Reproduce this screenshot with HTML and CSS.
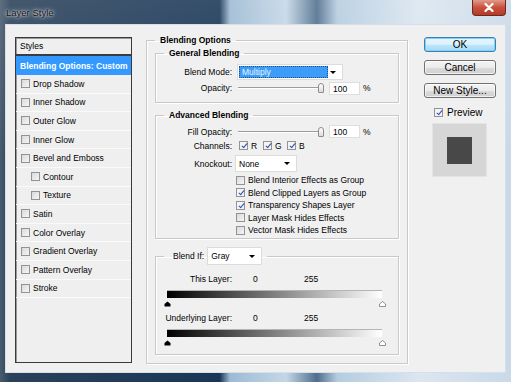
FILE: index.html
```html
<!DOCTYPE html>
<html lang="en">
<head>
    <meta charset="UTF-8">
    <title>Layer Style</title>
    <link rel="stylesheet" href="styles.css">
</head>
<body>
    <div class="window">
        <div class="titlebar">
            <span class="title">Layer Style</span>
            <div class="close">
                <svg width="10" height="9" viewBox="0 0 10 9"><path d="M1.5 1 L8.5 8 M8.5 1 L1.5 8" stroke="#fff" stroke-width="2.2" stroke-linecap="round"/></svg>
            </div>
        </div>
        <div class="client">
            <!-- styles list on the left -->
            <div class="styles-list">
                <div class="list-head">Styles</div>
                <div class="list-item selected">Blending Options: Custom</div>
                <div class="list-item"><span class="cb"></span>Drop Shadow</div>
                <div class="list-item"><span class="cb"></span>Inner Shadow</div>
                <div class="list-item"><span class="cb"></span>Outer Glow</div>
                <div class="list-item"><span class="cb"></span>Inner Glow</div>
                <div class="list-item"><span class="cb"></span>Bevel and Emboss</div>
                <div class="list-item sub"><span class="cb"></span>Contour</div>
                <div class="list-item sub"><span class="cb"></span>Texture</div>
                <div class="list-item"><span class="cb"></span>Satin</div>
                <div class="list-item"><span class="cb"></span>Color Overlay</div>
                <div class="list-item"><span class="cb"></span>Gradient Overlay</div>
                <div class="list-item"><span class="cb"></span>Pattern Overlay</div>
                <div class="list-item"><span class="cb"></span>Stroke</div>
            </div>

            <!-- blending options -->
            <fieldset class="group main">
                <legend>Blending Options</legend>

                <fieldset class="group general">
                    <legend>General Blending</legend>
                    <div class="row">
                        <label>Blend Mode:</label>
                        <div class="select mode"><span class="sel-text">Multiply</span><span class="arrow"></span></div>
                    </div>
                    <div class="row">
                        <label>Opacity:</label>
                        <div class="slider"><span class="track"></span><span class="knob"></span></div>
                        <span class="num">100</span>
                        <span class="pct">%</span>
                    </div>
                </fieldset>

                <fieldset class="group advanced">
                    <legend>Advanced Blending</legend>
                    <div class="row fill">
                        <label>Fill Opacity:</label>
                        <div class="slider"><span class="track"></span><span class="knob"></span></div>
                        <span class="num">100</span>
                        <span class="pct">%</span>
                    </div>
                    <div class="row channels">
                        <label>Channels:</label>
                        <span class="chan"><span class="cb on"></span>R</span>
                        <span class="chan"><span class="cb on"></span>G</span>
                        <span class="chan"><span class="cb on"></span>B</span>
                    </div>
                    <div class="row knockout">
                        <label>Knockout:</label>
                        <div class="select plain knock"><span class="sel-plain">None</span><span class="arrow"></span></div>
                    </div>
                    <div class="checks">
                        <div class="check"><span class="cb"></span>Blend Interior Effects as Group</div>
                        <div class="check"><span class="cb on"></span>Blend Clipped Layers as Group</div>
                        <div class="check"><span class="cb on"></span>Transparency Shapes Layer</div>
                        <div class="check"><span class="cb"></span>Layer Mask Hides Effects</div>
                        <div class="check"><span class="cb"></span>Vector Mask Hides Effects</div>
                    </div>
                </fieldset>

                <fieldset class="group blendif">
                    <legend>
                        <span class="legend-label">Blend If:</span>
                        <div class="select plain gray"><span class="sel-plain">Gray</span><span class="arrow"></span></div>
                    </legend>
                    <div class="row levels">
                        <label>This Layer:</label>
                        <span class="lo">0</span>
                        <span class="hi">255</span>
                    </div>
                    <div class="ramp"></div>
                    <div class="markers">
                        <svg width="7" height="6" viewBox="0 0 7 6"><path d="M3.5 0.5 L6.5 3 V5.5 H0.5 V3 Z" fill="#000"/></svg>
                        <svg width="7" height="6" viewBox="0 0 7 6"><path d="M3.5 0.5 L6.5 3 V5.5 H0.5 V3 Z" fill="#fff" stroke="#777" stroke-width="0.8"/></svg>
                    </div>
                    <div class="row levels second">
                        <label>Underlying Layer:</label>
                        <span class="lo">0</span>
                        <span class="hi">255</span>
                    </div>
                    <div class="ramp"></div>
                    <div class="markers">
                        <svg width="7" height="6" viewBox="0 0 7 6"><path d="M3.5 0.5 L6.5 3 V5.5 H0.5 V3 Z" fill="#000"/></svg>
                        <svg width="7" height="6" viewBox="0 0 7 6"><path d="M3.5 0.5 L6.5 3 V5.5 H0.5 V3 Z" fill="#fff" stroke="#777" stroke-width="0.8"/></svg>
                    </div>
                </fieldset>
            </fieldset>

            <!-- buttons and preview -->
            <div class="side">
                <div class="btn default">OK</div>
                <div class="btn">Cancel</div>
                <div class="btn">New Style...</div>
                <div class="preview-check"><span class="cb on"></span>Preview</div>
                <div class="swatch"><div class="swatch-inner"></div></div>
            </div>
        </div>
    </div>
</body>
</html>
```

FILE: styles.css
```css
body {
    margin: 0;
    font-family: "Liberation Sans", Arial, sans-serif;
    font-size: 8.5px;
    color: #000;
}

.window {
    width: 511px;
    height: 382px;
    display: flex;
    flex-direction: column;
    background:
        linear-gradient(rgba(255,255,255,0.12), rgba(255,255,255,0) 40%),
        linear-gradient(to right, #4a5c6e 0, #2a4159 2%, #1f3a58 30%, #1a3656 43%, #9dbad3 45%, #c4d7e7 56%, #4f6e8c 62%, #b5cce0 66%, #dbe6f0 82%, #c9d9e8 100%);
}

.titlebar {
    height: 24px;
    display: flex;
    align-items: center;
    padding-left: 6px;
}

.title {
    font-size: 9.5px;
    color: #111;
    text-shadow: 0 0 5px rgba(255,255,255,0.9), 0 0 2px rgba(255,255,255,0.9);
}

.close {
    margin-left: auto;
    margin-right: 5px;
    align-self: flex-start;
    width: 34px;
    height: 16px;
    display: flex;
    align-items: center;
    justify-content: center;
    background: linear-gradient(#e29a8a, #c8503e 50%, #b83a28);
    border: 1px solid #6b2a20;
    border-top: none;
    border-radius: 0 0 4px 4px;
    box-sizing: border-box;
}

.client {
    flex: 1;
    margin: 0 5px 9px 5px;
    background: #f0f0f0;
    border: 1px solid #d6e0ea;
    display: flex;
    align-items: flex-start;
    padding: 9px 9px 0 9px;
}

/* left list */
.styles-list {
    width: 117px;
    height: 326px;
    margin-top: 3px;
    box-sizing: border-box;
    border: 1px solid #3a3a3a;
    box-shadow: inset 1px 1px 0 #9a9a9a;
    background: #efefef;
    flex-shrink: 0;
}

.list-head {
    height: 16px;
    line-height: 16px;
    padding-left: 4px;
    border-bottom: 2px solid #3c3c3c;
}

.list-item {
    height: 18.6px;
    display: flex;
    align-items: center;
    padding-left: 5px;
    border-bottom: 1px solid #fafafa;
    box-sizing: border-box;
}

.list-item.selected {
    height: 19px;
    background: #3399ff;
    color: #fff;
    font-weight: bold;
    padding-left: 4px;
    border-bottom: none;
}

.list-item.sub {
    padding-left: 15px;
}

.cb {
    width: 9px;
    height: 9px;
    box-sizing: border-box;
    border: 1px solid #939393;
    background: linear-gradient(135deg, #d9d9d9, #f6f6f6);
    margin-right: 3px;
    flex-shrink: 0;
    position: relative;
}

.cb.on {
    background: #f4f4f4;
}

.cb.on::after {
    content: "";
    position: absolute;
    left: 2.5px;
    top: 0;
    width: 2px;
    height: 5px;
    border-right: 1.5px solid #2a4fb0;
    border-bottom: 1.5px solid #2a4fb0;
    transform: rotate(40deg);
}

/* group boxes */
.group {
    margin: 0;
    padding: 0 8px;
    box-sizing: border-box;
    border: 1px solid #c9c9c9;
    box-shadow: 1px 1px 0 #fff, inset 1px 1px 0 #fff;
    min-width: 0;
}

.group legend {
    padding: 0 5px;
    font-weight: bold;
    line-height: 13px;
}

.main {
    width: 262px;
    height: 330px;
    margin-left: 14px;
    flex-shrink: 0;
    padding-bottom: 8px;
}

.general {
    height: 56px;
    padding-top: 4px;
}

.advanced {
    height: 130px;
    margin-top: 6px;
    padding-top: 2px;
}

.blendif {
    height: 108px;
    margin-top: 8px;
    padding-top: 7px;
}

.blendif legend {
    display: flex;
    align-items: center;
    padding: 0 5px 0 9px;
    font-weight: normal;
    line-height: 18px;
}

.legend-label {
    margin-right: 3px;
}

.row {
    display: flex;
    align-items: center;
    height: 16px;
}

.row label {
    width: 68px;
    text-align: right;
    margin-right: 5px;
    flex-shrink: 0;
}

.row.fill {
    height: 15px;
}

.channels {
    height: 13px;
}

.chan {
    width: 24px;
    display: flex;
    align-items: center;
    margin-left: 2px;
    margin-right: -2px;
}

.knockout {
    height: 17px;
    margin-top: 3px;
}

/* select boxes */
.select {
    display: flex;
    align-items: center;
    background: #fff;
    border: 1px solid #dcdcdc;
    box-sizing: border-box;
    padding: 1px;
}

.mode {
    width: 106px;
    height: 16px;
}

.sel-text {
    width: 89px;
    height: 12px;
    line-height: 11px;
    box-sizing: border-box;
    background: #3d9cf7;
    border: 1px dotted #1d4f8f;
    color: #e9f4ff;
    padding-left: 2px;
}

.sel-plain {
    padding-left: 2px;
    flex: 1;
}

.plain {
    height: 17px;
}

.knock {
    width: 62px;
    margin-left: -2px;
}

.gray {
    width: 55px;
    height: 18px;
}

.arrow {
    width: 0;
    height: 0;
    border-left: 3px solid transparent;
    border-right: 3px solid transparent;
    border-top: 3.5px solid #000;
    margin: 0 5px 0 auto;
}

/* sliders */
.slider {
    width: 87px;
    height: 12px;
    display: flex;
    align-items: center;
    margin-left: 1px;
}

.track {
    flex: 1;
    height: 0;
    border-top: 1px solid #9c9c9c;
    border-bottom: 1px solid #fff;
}

.knob {
    width: 6px;
    height: 10px;
    box-sizing: border-box;
    border: 1px solid #8c8c8c;
    border-radius: 3px 3px 1px 1px;
    background: linear-gradient(#fff, #dcdcdc);
    margin-right: 1px;
}

.num {
    width: 31px;
    height: 13px;
    line-height: 13px;
    box-sizing: border-box;
    background: #fff;
    border: 1px solid #dedede;
    padding-left: 3px;
    margin-left: 4px;
}

.pct {
    margin-left: 3px;
}

.checks {
    margin-top: 2px;
    padding-left: 72px;
}

.check {
    height: 12.5px;
    display: flex;
    align-items: center;
}

/* blend if */
.levels {
    height: 14px;
}

.levels.second {
    margin-top: 4px;
}

.lo {
    margin-left: 16px;
    width: 51px;
}

.ramp {
    margin: 4px 0 0 3px;
    width: 215px;
    height: 8px;
    box-sizing: border-box;
    border-top: 1px solid #b5b5b5;
    background: linear-gradient(to right, #000, #fff);
}

.markers {
    width: 222px;
    margin: 3px 0 0 -0.5px;
    display: flex;
    justify-content: space-between;
    height: 6px;
}

.markers svg {
    display: block;
}

/* right column */
.side {
    width: 72px;
    margin-left: 16px;
    margin-top: 3px;
    display: flex;
    flex-direction: column;
    flex-shrink: 0;
}

.btn {
    height: 15px;
    margin-bottom: 8px;
    box-sizing: border-box;
    border: 1px solid #707070;
    border-radius: 3px;
    background: linear-gradient(#f4f4f4 0, #ebebeb 50%, #dcdcdc 51%, #cfcfcf 100%);
    box-shadow: inset 0 0 0 1px rgba(255,255,255,0.7);
    font-size: 10px;
    line-height: 13px;
    text-align: center;
}

.btn.default {
    border-color: #3c7fb1;
    background: linear-gradient(#eaf6fd 0, #d9f0fc 50%, #bee6fd 51%, #a7d9f5 100%);
    box-shadow: inset 0 0 0 1px #7fd1f8;
}

.preview-check {
    display: flex;
    align-items: center;
    margin-top: 2px;
    margin-left: 10px;
    height: 9px;
    font-size: 10px;
}

.preview-check .cb {
    margin-right: 4px;
}

.swatch {
    width: 55px;
    height: 54px;
    margin: 6px 0 0 8px;
    background: #d6d6d6;
    border: 1px solid #e4e4e4;
    box-sizing: border-box;
    display: flex;
    align-items: center;
    justify-content: center;
}

.swatch-inner {
    width: 25px;
    height: 27px;
    background: #484848;
}
```
